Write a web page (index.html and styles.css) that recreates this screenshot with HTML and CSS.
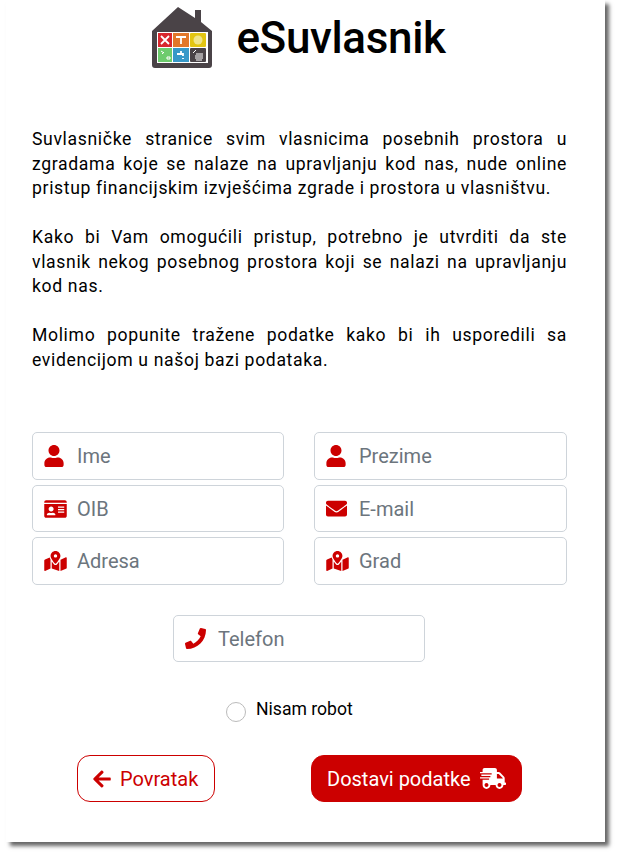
FILE: index.html
```html
<!DOCTYPE html>
<html lang="hr">
<head>
<meta charset="utf-8">
<title>eSuvlasnik</title>
<link rel="stylesheet" href="styles.css">
</head>
<body>
<main class="card">
  <header class="brand">
    <svg class="logo" viewBox="0 0 60 61" aria-hidden="true">
      <path class="house" d="M26 0 L43 11 V3 H49 V15 L60 24 V58 Q60 61 57 61 H3 Q0 61 0 58 V24 Z"/>
      <rect class="panel" x="5" y="25" width="51" height="31"/>
      <rect x="6" y="26" width="14" height="14" fill="#d8272d"/>
      <rect x="21" y="26" width="16" height="14" fill="#e2772a"/>
      <rect x="38" y="26" width="16" height="14" rx="1" fill="#e3c512"/>
      <rect x="6" y="41" width="14" height="14" fill="#6dcb6d"/>
      <rect x="21" y="41" width="16" height="14" fill="#3799c9"/>
      <rect x="38" y="41" width="16" height="14" rx="1" fill="#4a4347"/>
      <path class="glyph" d="M9 29l8 8M17 29l-8 8"/>
      <path class="glyph" d="M24 30h10M29 30v7"/>
      <circle cx="46" cy="33" r="4.5" fill="#f0e58a"/>
      <path class="glyph thin" d="M9 44l3 2M10 47l2-2M15 50h3v2h-3z"/>
      <path class="glyph" d="M25 47h6v2M29 44v3M31 51v1"/>
      <path class="glyph thin" d="M41 46l3-3M44 47h7M43 49h8M43 51h8M44 53h6"/>
    </svg>
    <h1 class="title">eSuvlasnik</h1>
  </header>

  <section class="intro">
    <p>Suvlasničke stranice svim vlasnicima posebnih prostora u zgradama koje se nalaze na upravljanju kod nas, nude online pristup financijskim izvješćima zgrade i prostora u vlasništvu.</p>
    <p>Kako bi Vam omogućili pristup, potrebno je utvrditi da ste vlasnik nekog posebnog prostora koji se nalazi na upravljanju kod nas.</p>
    <p>Molimo popunite tražene podatke kako bi ih usporedili sa evidencijom u našoj bazi podataka.</p>
  </section>

  <form class="form">
    <div class="fields">
      <label class="field">
        <svg class="icon i-user" viewBox="0 0 448 512"><path d="M224 256c70.7 0 128-57.3 128-128S294.7 0 224 0 96 57.3 96 128s57.3 128 128 128zm89.6 32h-16.7c-22.2 10.2-46.9 16-72.9 16s-50.6-5.8-72.9-16h-16.7C60.2 288 0 348.2 0 422.4V464c0 26.5 21.5 48 48 48h352c26.5 0 48-21.5 48-48v-41.6c0-74.2-60.2-134.4-134.4-134.4z"/></svg>
        <input type="text" placeholder="Ime">
      </label>
      <label class="field">
        <svg class="icon i-user" viewBox="0 0 448 512"><path d="M224 256c70.7 0 128-57.3 128-128S294.7 0 224 0 96 57.3 96 128s57.3 128 128 128zm89.6 32h-16.7c-22.2 10.2-46.9 16-72.9 16s-50.6-5.8-72.9-16h-16.7C60.2 288 0 348.2 0 422.4V464c0 26.5 21.5 48 48 48h352c26.5 0 48-21.5 48-48v-41.6c0-74.2-60.2-134.4-134.4-134.4z"/></svg>
        <input type="text" placeholder="Prezime">
      </label>
      <label class="field field-mid">
        <svg class="icon i-wide" viewBox="0 0 576 512"><path d="M528 32H48C21.5 32 0 53.5 0 80v16h576V80c0-26.5-21.5-48-48-48zM0 432c0 26.5 21.5 48 48 48h480c26.5 0 48-21.5 48-48V128H0v304zm352-232c0-4.4 3.6-8 8-8h144c4.4 0 8 3.6 8 8v16c0 4.4-3.6 8-8 8H360c-4.4 0-8-3.6-8-8v-16zm0 64c0-4.4 3.6-8 8-8h144c4.4 0 8 3.6 8 8v16c0 4.4-3.6 8-8 8H360c-4.4 0-8-3.6-8-8v-16zm0 64c0-4.4 3.6-8 8-8h144c4.4 0 8 3.6 8 8v16c0 4.4-3.6 8-8 8H360c-4.4 0-8-3.6-8-8v-16zM176 192c35.3 0 64 28.7 64 64s-28.7 64-64 64-64-28.7-64-64 28.7-64 64-64zM67.1 396.2C75.5 370.5 99.6 352 128 352h8.2c12.3 5.1 25.7 8 39.8 8s27.6-2.9 39.8-8h8.2c28.4 0 52.5 18.5 60.9 44.2 3.2 9.9-5.2 19.8-15.6 19.8H82.7c-10.4 0-18.8-10-15.6-19.8z"/></svg>
        <input type="text" placeholder="OIB">
      </label>
      <label class="field field-mid">
        <svg class="icon i-mail" viewBox="0 0 512 512"><path d="M502.3 190.8c3.9-3.1 9.7-.2 9.7 4.7V400c0 26.5-21.5 48-48 48H48c-26.5 0-48-21.5-48-48V195.6c0-5 5.7-7.8 9.7-4.7 22.4 17.4 52.1 39.5 154.1 113.6 21.1 15.4 56.7 47.8 92.2 47.6 35.7.3 72-32.8 92.3-47.6 102-74.1 131.6-96.3 154-113.7zM256 320c23.2.4 56.6-29.2 73.4-41.4 132.7-96.3 142.8-104.7 173.4-128.7 5.8-4.5 9.2-11.5 9.2-18.9v-19c0-26.5-21.5-48-48-48H48C21.5 64 0 85.5 0 112v19c0 7.4 3.4 14.3 9.2 18.9 30.6 23.9 40.7 32.4 173.4 128.7 16.8 12.2 50.2 41.8 73.4 41.4z"/></svg>
        <input type="text" placeholder="E-mail">
      </label>
      <label class="field">
        <svg class="icon i-wide" viewBox="0 0 576 512"><path d="M288 0c-69.59 0-126 56.41-126 126 0 56.26 82.35 158.8 113.9 196.02 6.39 7.54 17.82 7.54 24.2 0C331.65 284.8 414 182.26 414 126 414 56.41 357.59 0 288 0zm0 168c-23.2 0-42-18.8-42-42s18.8-42 42-42 42 18.8 42 42-18.8 42-42 42zM20.12 215.95A32.006 32.006 0 0 0 0 245.66v250.32c0 11.32 11.43 19.06 21.94 14.86L160 448V214.92c-8.84-15.98-16.07-31.54-21.25-46.42L20.12 215.95zM288 359.67c-14.07 0-27.38-6.18-36.51-16.96-19.66-23.2-40.57-49.62-59.49-76.72V448l192 64V266c-18.92 27.09-39.82 53.52-59.49 76.72-9.13 10.77-22.44 16.95-36.51 16.95zm266.06-198.51L416 224v288l139.88-55.95A31.996 31.996 0 0 0 576 426.34V176.02c0-11.32-11.43-19.06-21.94-14.86z"/></svg>
        <input type="text" placeholder="Adresa">
      </label>
      <label class="field">
        <svg class="icon i-wide" viewBox="0 0 576 512"><path d="M288 0c-69.59 0-126 56.41-126 126 0 56.26 82.35 158.8 113.9 196.02 6.39 7.54 17.82 7.54 24.2 0C331.65 284.8 414 182.26 414 126 414 56.41 357.59 0 288 0zm0 168c-23.2 0-42-18.8-42-42s18.8-42 42-42 42 18.8 42 42-18.8 42-42 42zM20.12 215.95A32.006 32.006 0 0 0 0 245.66v250.32c0 11.32 11.43 19.06 21.94 14.86L160 448V214.92c-8.84-15.98-16.07-31.54-21.25-46.42L20.12 215.95zM288 359.67c-14.07 0-27.38-6.18-36.51-16.96-19.66-23.2-40.57-49.62-59.49-76.72V448l192 64V266c-18.92 27.09-39.82 53.52-59.49 76.72-9.13 10.77-22.44 16.95-36.51 16.95zm266.06-198.51L416 224v288l139.88-55.95A31.996 31.996 0 0 0 576 426.34V176.02c0-11.32-11.43-19.06-21.94-14.86z"/></svg>
        <input type="text" placeholder="Grad">
      </label>
    </div>

    <label class="field field-phone">
      <svg class="icon i-phone" viewBox="0 0 512 512"><path d="M493.4 24.6l-104-24c-11.3-2.6-22.9 3.3-27.5 13.9l-48 112c-4.2 9.8-1.4 21.3 6.9 28l60.6 49.6c-36 76.7-98.9 140.5-177.2 177.2l-49.6-60.6c-6.8-8.3-18.2-11.1-28-6.9l-112 48C3.9 366.5-2 378.1.6 389.4l24 104C27.1 504.2 36.7 512 48 512c256.1 0 464-207.5 464-464 0-11.2-7.7-20.9-18.6-23.4z"/></svg>
      <input type="text" placeholder="Telefon">
    </label>

    <label class="robot">
      <span class="radio"></span>
      <span class="robot-text">Nisam robot</span>
    </label>

    <div class="actions">
      <button type="button" class="btn btn-back">
        <svg class="btn-icon i-arrow" viewBox="0 0 448 512"><path d="M257.5 445.1l-22.2 22.2c-9.4 9.4-24.6 9.4-33.9 0L7 273c-9.4-9.4-9.4-24.6 0-33.9L201.4 44.7c9.4-9.4 24.6-9.4 33.9 0l22.2 22.2c9.5 9.5 9.3 25-.4 34.3L136.6 216H424c13.3 0 24 10.7 24 24v32c0 13.3-10.7 24-24 24H136.6l120.5 114.8c9.8 9.3 10 24.8.4 34.3z"/></svg>
        Povratak
      </button>
      <button type="button" class="btn btn-send">
        Dostavi podatke
        <svg class="btn-icon i-truck" viewBox="0 0 640 512"><path d="M624 352h-16V243.9c0-12.7-5.1-24.9-14.1-33.9L494 110.1c-9-9-21.2-14.1-33.9-14.1H416V48c0-26.5-21.5-48-48-48H112C85.5 0 64 21.5 64 48v48H8c-4.4 0-8 3.6-8 8v16c0 4.4 3.6 8 8 8h272c4.4 0 8 3.6 8 8v16c0 4.4-3.6 8-8 8H40c-4.4 0-8 3.6-8 8v16c0 4.4 3.6 8 8 8h208c4.4 0 8 3.6 8 8v16c0 4.4-3.6 8-8 8H8c-4.4 0-8 3.6-8 8v16c0 4.4 3.6 8 8 8h208c4.4 0 8 3.6 8 8v16c0 4.4-3.6 8-8 8H64v128c0 53 43 96 96 96s96-43 96-96h128c0 53 43 96 96 96s96-43 96-96h48c8.8 0 16-7.2 16-16v-32c0-8.8-7.2-16-16-16zM160 464c-26.5 0-48-21.5-48-48s21.5-48 48-48 48 21.5 48 48-21.5 48-48 48zm320 0c-26.5 0-48-21.5-48-48s21.5-48 48-48 48 21.5 48 48-21.5 48-48 48zm80-208H416V144h44.1l99.9 99.9V256z"/></svg>
      </button>
    </div>
  </form>
</main>
</body>
</html>
```

FILE: styles.css
```css
* { box-sizing: border-box; }
html { overflow: hidden; background: #fff; }
body { margin: 0; padding: 0 0 15px; font-family: Roboto, "Liberation Sans", sans-serif; color: #000; }

.card {
  width: 599px;
  height: 842px;
  margin-left: 6px;
  padding: 7px 38px 0 26px;
  background: #fff;
  box-shadow: 4px 4px 4px #666;
}

.brand {
  display: flex;
  align-items: center;
  justify-content: center;
  gap: 24px;
  height: 61px;
  padding-right: 1px;
}
.logo { width: 60px; height: 61px; flex: none; }
.house { fill: #4a4347; }
.panel { fill: #fff; }
.glyph { fill: none; stroke: #fff; stroke-width: 1.8; }
.thin { stroke-width: 1; }
.title { margin: 0; font-size: 44px; font-weight: 500; line-height: 1; letter-spacing: -0.35px; }

.intro { margin-top: 58px; padding-top: 1px; font-size: 17.6px; letter-spacing: 0.65px; line-height: 24.5px; text-align: justify; }
.intro p { margin: 0 0 24.5px; }

.form { margin-top: 60px; }
.fields { display: grid; grid-template-columns: 252px 253px; column-gap: 30px; row-gap: 5px; }

.field {
  display: flex;
  align-items: center;
  height: 48px;
  padding-left: 11px;
  border: 1px solid #ced4da;
  border-radius: 5px;
  background: #fff;
}
.field-mid { height: 47px; }
.field-phone { width: 252px; height: 47px; margin: 30px 0 0 141px; }

.field input {
  flex: 1;
  min-width: 0;
  border: 0;
  outline: 0;
  padding: 0;
  background: transparent;
  font: 400 20px Roboto, sans-serif;
  color: #495057;
}
.field-mid input, .field-phone input { padding-top: 1px; }
.field input::placeholder { color: #6c757d; opacity: 1; }

.icon { flex: none; fill: #c00; margin-right: 10px; }
.i-user { width: 20px; height: 22px; margin-right: 13px; }
.i-wide { width: 23px; height: 20px; }
.i-mail { width: 21px; height: 21px; margin-right: 12px; }
.i-phone { width: 21px; height: 21px; margin-right: 12px; }

.robot { display: flex; align-items: flex-start; margin: 38px 0 0 194px; height: 46px; }
.radio { width: 20px; height: 20px; margin-top: 2px; margin-right: 10px; border: 1px solid #bbb; border-radius: 50%; background: #fff; }
.robot-text { font-size: 17.6px; line-height: 20px; margin-top: -1px; }

.actions { display: flex; margin: 9px 0 0 45px; gap: 96px; }
.btn {
  display: flex;
  align-items: center;
  height: 47px;
  border-radius: 13px;
  font: 400 20px Roboto, sans-serif;
}
.btn-back { width: 138px; padding: 0 0 0 15px; gap: 9px; border: 1px solid #c00; background: #fff; color: #c00; }
.btn-send { width: 211px; padding: 0 0 0 15px; gap: 9px; border: 1px solid #c00; background: #c00; color: #fff; }
.btn-icon { flex: none; fill: currentColor; }
.i-arrow { width: 18px; height: 20px; }
.i-truck { width: 26px; height: 21px; }
```
